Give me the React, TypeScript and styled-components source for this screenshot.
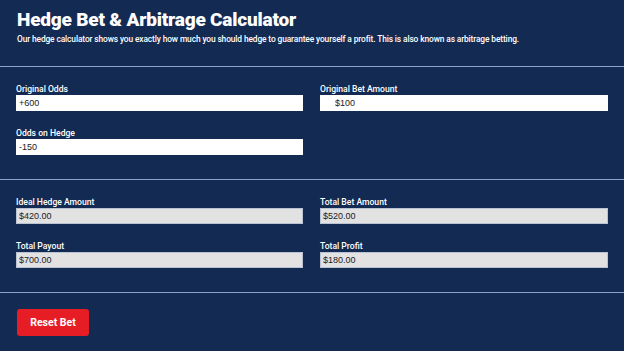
import styled, { createGlobalStyle } from "styled-components";

const GlobalStyle = createGlobalStyle`
  html, body {
    margin: 0;
    padding: 0;
    background: #132a52;
  }
  * {
    box-sizing: border-box;
  }
`;

const Page = styled.div`
  width: 624px;
  min-height: 351px;
  background: #132a52;
  font-family: "Roboto", "Inter", sans-serif;
  color: #ffffff;
`;

const Header = styled.header`
  padding: 8px 17px 21px;
  border-bottom: 1px solid #8da2c6;
`;

const Title = styled.h1`
  margin: 0;
  font-size: 19px;
  line-height: 24px;
  font-weight: 900;
  letter-spacing: -0.2px;
`;

const Subtitle = styled.p`
  margin: 1px 0 0;
  font-size: 8.4px;
  line-height: 12px;
  font-weight: 500;
  letter-spacing: -0.12px;
`;

const Section = styled.section<{ last?: boolean }>`
  display: grid;
  grid-template-columns: 287px 288px;
  column-gap: 17px;
  row-gap: 16px;
  padding: 16px 16px ${({ last }) => (last ? "16px" : "24px")};
  border-bottom: ${({ last }) => (last ? "none" : "1px solid #8da2c6")};
`;

const Field = styled.div`
  display: flex;
  flex-direction: column;
`;

const Label = styled.label`
  font-size: 8.6px;
  line-height: 12px;
  font-weight: 500;
`;

const Input = styled.input<{ readOnly?: boolean; indent?: boolean }>`
  height: 16px;
  width: 100%;
  margin: 0;
  padding: 0 0 0 ${({ indent }) => (indent ? "14px" : "2px")};
  border: 1px solid ${({ readOnly }) => (readOnly ? "#b9c3d4" : "#ffffff")};
  border-radius: 0;
  background: ${({ readOnly }) => (readOnly ? "#e2e2e2" : "#ffffff")};
  font-family: "Liberation Sans", Arial, sans-serif;
  font-size: 9px;
  color: #1b1b1b;
  outline: none;
`;

const ResetButton = styled.button`
  width: 72px;
  height: 27px;
  margin-left: 1px;
  border: none;
  border-radius: 3px;
  background: #e61d25;
  color: #ffffff;
  font-family: "Roboto", "Inter", sans-serif;
  font-size: 10.5px;
  font-weight: 700;
  cursor: pointer;
`;

interface FieldSpec {
  label: string;
  value: string;
  indent?: boolean;
}

const inputs: (FieldSpec | null)[] = [
  { label: "Original Odds", value: "+600" },
  { label: "Original Bet Amount", value: "$100", indent: true },
  { label: "Odds on Hedge", value: "-150" },
  null,
];

const results: FieldSpec[] = [
  { label: "Ideal Hedge Amount", value: "$420.00" },
  { label: "Total Bet Amount", value: "$520.00" },
  { label: "Total Payout", value: "$700.00" },
  { label: "Total Profit", value: "$180.00" },
];

function App() {
  return (
    <Page>
      <GlobalStyle />
      <Header>
        <Title>Hedge Bet &amp; Arbitrage Calculator</Title>
        <Subtitle>
          Our hedge calculator shows you exactly how much you should hedge to
          guarantee yourself a profit. This is also known as arbitrage betting.
        </Subtitle>
      </Header>

      <Section>
        {inputs.map((field, index) =>
          field ? (
            <Field key={field.label}>
              <Label>{field.label}</Label>
              <Input defaultValue={field.value} indent={field.indent} />
            </Field>
          ) : (
            <div key={`empty_${index}`} />
          )
        )}
      </Section>

      <Section>
        {results.map((field) => (
          <Field key={field.label}>
            <Label>{field.label}</Label>
            <Input readOnly value={field.value} />
          </Field>
        ))}
      </Section>

      <Section last>
        <ResetButton>Reset Bet</ResetButton>
      </Section>
    </Page>
  );
}

export default App;
